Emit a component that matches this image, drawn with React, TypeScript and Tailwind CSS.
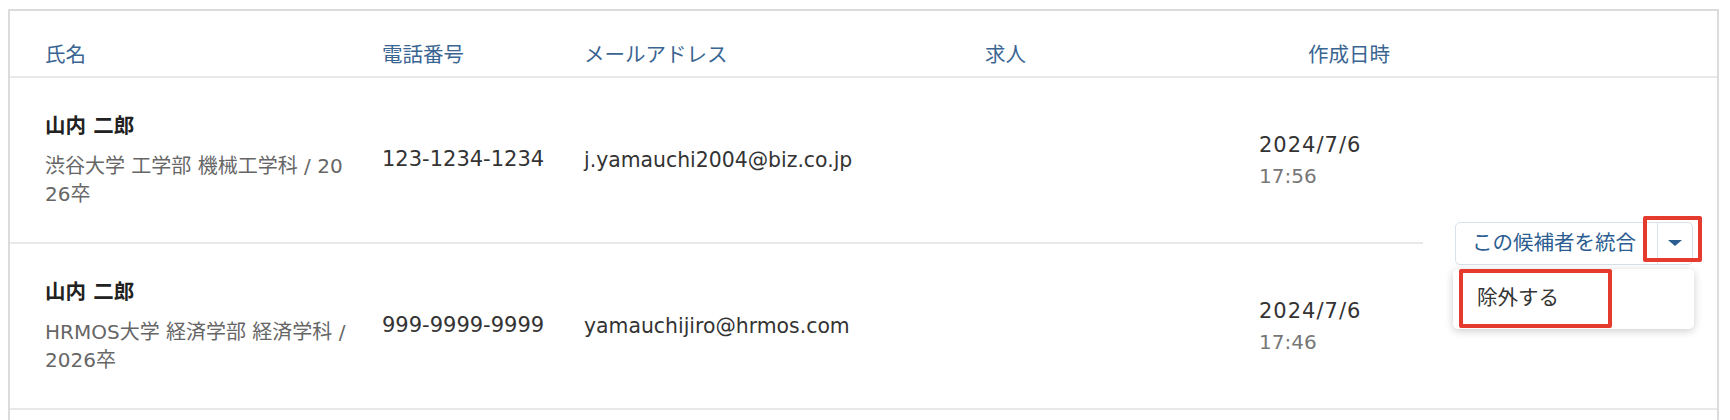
import React from 'react';

type Candidate = {
  name: string;
  school: string;
  phone: string;
  email: string;
  date: string;
  time: string;
};

const CANDIDATES: Candidate[] = [
  {
    name: '山内 二郎',
    school: '渋谷大学 工学部 機械工学科 / 2026卒',
    phone: '123-1234-1234',
    email: 'j.yamauchi2004@biz.co.jp',
    date: '2024/7/6',
    time: '17:56',
  },
  {
    name: '山内 二郎',
    school: 'HRMOS大学 経済学部 経済学科 / 2026卒',
    phone: '999-9999-9999',
    email: 'yamauchijiro@hrmos.com',
    date: '2024/7/6',
    time: '17:46',
  },
];

const headCell = 'border-b-2 border-[#e8e8e8] pt-[30px] pb-[7px] leading-[28px] text-[20.5px] text-[#3a6592]';
const rowCell = 'h-[166px] border-b-2 border-[#e8e8e8] flex';

const MergeButton: React.FC = () => {
  return (
    <div className="relative w-[238px]">
      <div className="flex h-[43px] rounded-[5px] border border-[#d9e1e9] bg-white">
        <button className="w-[201px] pl-[16px] flex items-center text-[20.5px] text-[#2b5d91] leading-none">
          この候補者を統合
        </button>
        <div className="flex-1 border-l border-[#d9e1e9] flex items-center justify-center">
          <span className="w-0 h-0 border-l-[7px] border-r-[7px] border-t-[6px] border-l-transparent border-r-transparent border-t-[#2b5d91]"></span>
        </div>
      </div>

      {/* dropdown menu */}
      <div className="absolute left-[-2px] top-[47px] w-[241px] h-[60px] bg-white rounded-[5px] shadow-[0_2px_8px_rgba(0,0,0,0.2)] flex items-center pl-[24px] text-[20.5px] text-[#333]">
        除外する
      </div>

      {/* annotation boxes */}
      <div className="absolute left-[188px] top-[-6px] w-[59px] h-[46px] border-[4px] border-[#e53b2f] rounded-[2px]"></div>
      <div className="absolute left-[4px] top-[47px] w-[153px] h-[59px] border-[4px] border-[#e53b2f] rounded-[2px]"></div>
    </div>
  );
};

export default function App() {
  return (
    <div className="min-h-screen bg-white pt-[9px] pl-[8px] pr-[11px] font-['DejaVu_Sans','Noto_Sans_CJK_JP',sans-serif] text-[20px]">
      <div className="border-2 border-[#dcdcdc] pb-[40px]">
        <div className="grid grid-cols-[372px_202px_401px_274px_164px_1fr]">
          <div className={`${headCell} pl-[35px]`}>氏名</div>
          <div className={headCell}>電話番号</div>
          <div className={headCell}>メールアドレス</div>
          <div className={headCell}>求人</div>
          <div className={`${headCell} pl-[49px]`}>作成日時</div>
          <div className={headCell}></div>

          <div className="col-start-6 row-start-2 row-span-2 border-b-2 border-[#e8e8e8] flex items-center justify-end pr-[24px]">
            <MergeButton />
          </div>

          {CANDIDATES.map((c, i) => (
            <React.Fragment key={i}>
              <div className={`${rowCell} flex-col justify-center pl-[35px] pr-[32px]`}>
                <div className="font-bold text-[20.5px] text-[#222] leading-[28px]">{c.name}</div>
                <div className="mt-[12px] text-[#666] leading-[28px] break-all">{c.school}</div>
              </div>
              <div className={`${rowCell} items-center text-[21px] text-[#333]`}>{c.phone}</div>
              <div className={`${rowCell} items-center text-[20.4px] text-[#333]`}>{c.email}</div>
              <div className={rowCell}></div>
              <div className={`${rowCell} flex-col justify-center`}>
                <div className="text-[21px] tracking-[1px] text-[#333] leading-[28px]">{c.date}</div>
                <div className="mt-[3px] text-[#777] leading-[28px]">{c.time}</div>
              </div>
            </React.Fragment>
          ))}
        </div>
      </div>
    </div>
  );
}
